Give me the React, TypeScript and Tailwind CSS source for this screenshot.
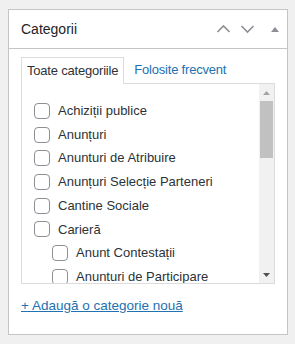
const items: { label: string; child?: boolean }[] = [
  { label: 'Achiziții publice' },
  { label: 'Anunțuri' },
  { label: 'Anunturi de Atribuire' },
  { label: 'Anunțuri Selecție Parteneri' },
  { label: 'Cantine Sociale' },
  { label: 'Carieră' },
  { label: 'Anunt Contestații', child: true },
  { label: 'Anunturi de Participare', child: true },
  { label: 'Concursuri', child: true },
];

function Chevron({ up }: { up?: boolean }) {
  return (
    <svg width="15" height="10" viewBox="0 0 15 10" fill="none">
      <path
        d={up ? 'M1.5 8 L7.5 2 L13.5 8' : 'M1.5 2 L7.5 8 L13.5 2'}
        stroke="#8c8f94"
        strokeWidth="1.6"
      />
    </svg>
  );
}

export default function App() {
  return (
    <div className="w-[295px] h-[344px] bg-[#f0f0f1] pt-[9px] pl-[8px]" style={{ fontFamily: '"Liberation Sans", Arial, sans-serif' }}>
      <div className="w-[280px] h-[326px] border border-[#c3c4c7] bg-white">
        {/* header */}
        <div className="h-[39px] border-b border-[#c3c4c7] flex items-center justify-between pl-[12px]">
          <span className="text-[14px] text-[#1d2327]">Categorii</span>
          <div className="flex items-center">
            <div className="w-[24px] flex justify-center"><Chevron up /></div>
            <div className="w-[24px] mr-[4px] flex justify-center"><Chevron /></div>
            <div className="w-[24px] flex justify-center">
              <svg width="8" height="5" viewBox="0 0 8 5"><path d="M0 5 L4 0 L8 5 Z" fill="#8c8f94" /></svg>
            </div>
          </div>
        </div>

        {/* body */}
        <div className="pt-[7px] px-[12px]">
          <div className="flex items-end text-[13px] tracking-[-0.2px]">
            <div className="h-[27px] px-[5px] border border-b-0 border-[#dcdcde] bg-white text-[#2c3338] flex items-center relative top-[1px]">
              Toate categoriile
            </div>
            <div className="h-[26px] pl-[10px] text-[#2271b1] flex items-center">Folosite frecvent</div>
          </div>

          <div className="h-[201px] border border-[#dcdcde] flex overflow-hidden">
            <div className="flex-1 pl-[12px] pt-[15px] overflow-hidden text-[13px] text-[#2c3338]">
              {items.map((it) => (
                <div key={it.label} className={`h-[23.7px] flex items-center gap-[8px] whitespace-nowrap ${it.child ? 'pl-[18px]' : ''}`}>
                  <span className="w-[16px] h-[16px] shrink-0 rounded-[4px] border border-[#8c8f94] bg-white" />
                  <span>{it.label}</span>
                </div>
              ))}
            </div>
            {/* scrollbar */}
            <div className="w-[15px] bg-[#f1f1f1] flex flex-col">
              <div className="h-[17px] flex items-center justify-center">
                <svg width="7" height="4" viewBox="0 0 7 4"><path d="M0 4 L3.5 0 L7 4 Z" fill="#a3a3a3" /></svg>
              </div>
              <div className="h-[57px] mx-[1px] bg-[#c1c1c1]" />
              <div className="flex-1" />
              <div className="h-[17px] flex items-center justify-center">
                <svg width="7" height="4" viewBox="0 0 7 4"><path d="M0 0 L3.5 4 L7 0 Z" fill="#505050" /></svg>
              </div>
            </div>
          </div>

          <div className="pt-[9px] h-[29px]">
            <a className="text-[13.5px] leading-[20px] text-[#2271b1] underline">+ Adaugă o categorie nouă</a>
          </div>
        </div>
      </div>
    </div>
  );
}
